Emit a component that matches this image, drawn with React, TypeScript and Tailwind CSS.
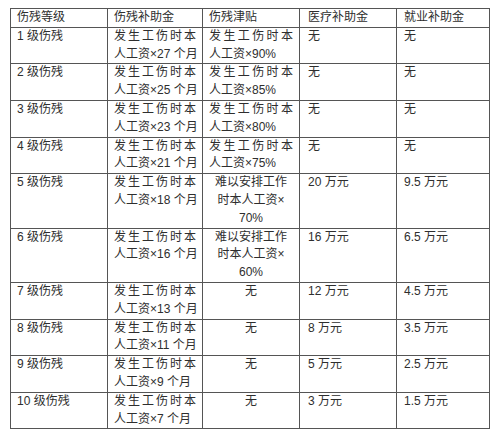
const rows = [
  { level: '1 级伤残', subsidy: '人工资×27 个月', allowance: ['发生工伤时本', '人工资×90%'], medical: '无', job: '无' },
  { level: '2 级伤残', subsidy: '人工资×25 个月', allowance: ['发生工伤时本', '人工资×85%'], medical: '无', job: '无' },
  { level: '3 级伤残', subsidy: '人工资×23 个月', allowance: ['发生工伤时本', '人工资×80%'], medical: '无', job: '无' },
  { level: '4 级伤残', subsidy: '人工资×21 个月', allowance: ['发生工伤时本', '人工资×75%'], medical: '无', job: '无' },
  { level: '5 级伤残', subsidy: '人工资×18 个月', allowance: ['难以安排工作', '时本人工资×', '70%'], medical: '20 万元', job: '9.5 万元', center: true },
  { level: '6 级伤残', subsidy: '人工资×16 个月', allowance: ['难以安排工作', '时本人工资×', '60%'], medical: '16 万元', job: '6.5 万元', center: true },
  { level: '7 级伤残', subsidy: '人工资×13 个月', allowance: ['无'], medical: '12 万元', job: '4.5 万元', center: true },
  { level: '8 级伤残', subsidy: '人工资×11 个月', allowance: ['无'], medical: '8 万元', job: '3.5 万元', center: true },
  { level: '9 级伤残', subsidy: '人工资×9 个月', allowance: ['无'], medical: '5 万元', job: '2.5 万元', center: true },
  { level: '10 级伤残', subsidy: '人工资×7 个月', allowance: ['无'], medical: '3 万元', job: '1.5 万元', center: true },
];

const cell = 'border border-[#555] px-[6px] py-0 align-top';
const spread = 'block text-justify [text-align-last:justify]';

export default function App() {
  return (
    <div className="w-[500px] h-[443px] bg-white pt-[8px] pl-[10px] font-['Liberation_Sans','Noto_Sans_CJK_SC',sans-serif] text-[12px] leading-[17.8px] text-[#2e2e2e]">
      <table className="table-fixed border-collapse w-[479px]">
        <colgroup>
          <col className="w-[97px]" />
          <col className="w-[95px]" />
          <col className="w-[97px]" />
          <col className="w-[97px]" />
          <col className="w-[93px]" />
        </colgroup>
        <thead>
          <tr>
            <th className={`${cell} text-left font-normal`}>伤残等级</th>
            <th className={`${cell} text-left font-normal`}>伤残补助金</th>
            <th className={`${cell} text-left font-normal`}>伤残津贴</th>
            <th className={`${cell} text-left font-normal pl-[8px]`}>医疗补助金</th>
            <th className={`${cell} text-left font-normal pl-[7px]`}>就业补助金</th>
          </tr>
        </thead>
        <tbody>
          {rows.map((r) => (
            <tr key={r.level}>
              <td className={cell}>{r.level}</td>
              <td className={`${cell} whitespace-nowrap`}>
                <span className={spread}>发生工伤时本</span>
                <span className="block">{r.subsidy}</span>
              </td>
              {r.center ? (
                <td className={`${cell} text-center whitespace-nowrap`}>
                  {r.allowance.map((line) => (
                    <span key={line} className="block">
                      {line}
                    </span>
                  ))}
                </td>
              ) : (
                <td className={`${cell} whitespace-nowrap`}>
                  <span className={spread}>{r.allowance[0]}</span>
                  <span className="block">{r.allowance[1]}</span>
                </td>
              )}
              <td className={`${cell} pl-[8px]`}>{r.medical}</td>
              <td className={`${cell} pl-[7px]`}>{r.job}</td>
            </tr>
          ))}
        </tbody>
      </table>
    </div>
  );
}
